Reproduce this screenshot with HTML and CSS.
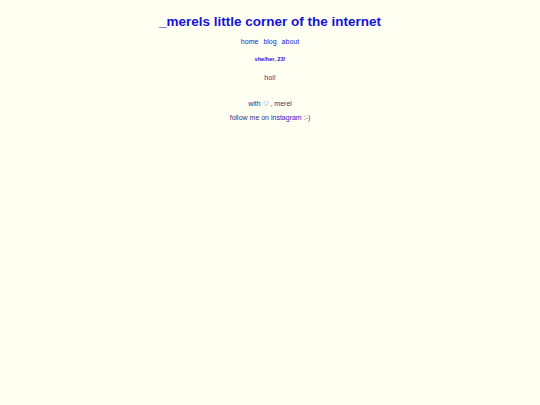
FILE: index.html
```html
<!DOCTYPE html>
<html>
<head>
<meta charset="utf-8">
<link rel="stylesheet" href="styles.css">
</head>
<body>
<div class="page">
  <h1 class="title">_merels little corner of the internet</h1>
  <nav class="nav"><a href="#">home</a><a href="#">blog</a><a href="#">about</a></nav>
  <p class="pron">she/her, 23!</p>
  <p class="hoi">hoi!</p>
  <p class="with">with ♡ , merel</p>
  <p class="follow">follow me on <a href="#">instagram</a> :-)</p>
</div>
</body>
</html>
```
FILE: styles.css
```css
html, body { margin: 0; padding: 0; background: #fffff2; }
body { font-family: "Liberation Sans", Arial, sans-serif; color: #33337a; }
.page { display: flex; flex-direction: column; align-items: center; padding-top: 13px; }
.title { margin: 0; font-size: 13.5px; font-weight: bold; color: #1414d6; line-height: 18px; }
.nav { margin-top: 6px; display: flex; gap: 5px; font-size: 7px; line-height: 10px; }
.nav a { color: #1a1ad0; text-decoration: none; }
.pron { margin: 8px 0 0; font-size: 5.6px; font-weight: bold; color: #1414d6; line-height: 8px; }
.hoi { margin: 10px 0 0; font-size: 7px; line-height: 10px; }
.with { margin: 16px 0 0; font-size: 7px; line-height: 10px; }
.follow { margin: 4px 0 0; font-size: 7px; line-height: 10px; }
.follow a { color: #1a1ad0; text-decoration: none; }
```
